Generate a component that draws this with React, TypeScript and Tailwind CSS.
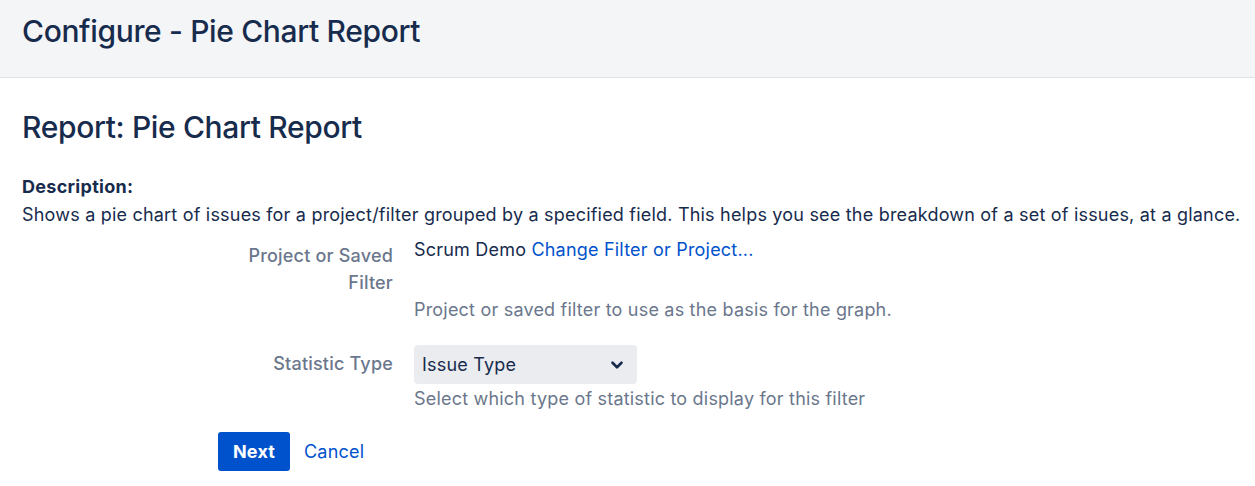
import { ChevronDown } from 'lucide-react';

export default function App() {
  return (
    <div className="min-h-screen bg-white text-[#172b4d] font-['Inter',_'Liberation_Sans',_sans-serif]">
      {/* Page header */}
      <header className="h-[78px] bg-[#f4f5f7] border-b border-[#dfe1e6] px-[22px] pt-[12px]">
        <h1 className="text-[30px] leading-[38px] font-medium tracking-[-0.35px]">Configure - Pie Chart Report</h1>
      </header>

      <main className="px-[22px]">
        <h2 className="mt-[30px] text-[30px] leading-[38px] font-medium tracking-[-0.35px]">Report: Pie Chart Report</h2>

        <div className="mt-[27px] text-[18px] leading-[28px] tracking-[0.2px]">
          <p className="font-bold tracking-[0.3px]">Description:</p>
          <p className="whitespace-nowrap">
            Shows a pie chart of issues for a project/filter grouped by a specified field. This helps you see the
            breakdown of a set of issues, at a glance.
          </p>
        </div>

        <form className="ml-[196px] mt-[7px] text-[18px] tracking-[0.2px]">
          {/* Project or saved filter */}
          <div className="flex gap-[21px]">
            <div className="w-[175px] text-right text-[#6b778c] font-medium leading-[27px] pt-[6px]">
              Project or Saved Filter
            </div>
            <div className="leading-[27px]">
              <div>
                Scrum Demo{' '}
                <a href="#" className="text-[#0052cc]">
                  Change Filter or Project...
                </a>
              </div>
              <div className="mt-[33px] text-[#6b778c]">Project or saved filter to use as the basis for the graph.</div>
            </div>
          </div>

          {/* Statistic type */}
          <div className="flex gap-[21px] mt-[22px]">
            <div className="w-[175px] text-right text-[#6b778c] font-medium leading-[27px] pt-[5px]">
              Statistic Type
            </div>
            <div>
              <button
                type="button"
                className="w-[223px] h-[39px] rounded-[4px] bg-[#ebecf0] flex items-center justify-between pl-[8px] pr-[11px] text-[18px] tracking-[0.2px]"
              >
                <span>Issue Type</span>
                <ChevronDown className="w-[18px] h-[18px]" strokeWidth={3.5} />
              </button>
              <div className="mt-[1px] leading-[27px] text-[#6b778c]">Select which type of statistic to display for this filter</div>
            </div>
          </div>

          {/* Actions */}
          <div className="flex items-center gap-[14px] mt-[20px]">
            <button type="button" className="h-[39px] w-[72px] rounded-[3px] bg-[#0052cc] text-white font-bold text-[18px]">
              Next
            </button>
            <a href="#" className="text-[#0052cc] text-[18px]">
              Cancel
            </a>
          </div>
        </form>
      </main>
    </div>
  );
}
